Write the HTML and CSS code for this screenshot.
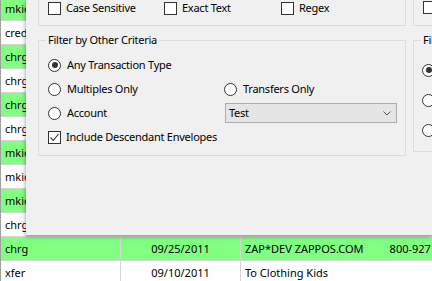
FILE: index.html
```html
<!DOCTYPE html>
<html>
<head>
    <meta charset="utf-8">
    <title>Filter Transactions</title>
    <link rel="stylesheet" href="styles.css">
</head>
<body>
    <div class="grid">
        <div class="row green"><div class="cell">mkid</div><div class="cell date"></div><div class="cell"></div></div>
        <div class="row"><div class="cell">cred</div><div class="cell date"></div><div class="cell"></div></div>
        <div class="row green"><div class="cell">chrg</div><div class="cell date"></div><div class="cell"></div></div>
        <div class="row"><div class="cell">chrg</div><div class="cell date"></div><div class="cell"></div></div>
        <div class="row green"><div class="cell">chrg</div><div class="cell date"></div><div class="cell"></div></div>
        <div class="row"><div class="cell">chrg</div><div class="cell date"></div><div class="cell"></div></div>
        <div class="row green"><div class="cell">mkid</div><div class="cell date"></div><div class="cell"></div></div>
        <div class="row"><div class="cell">mkid</div><div class="cell date"></div><div class="cell"></div></div>
        <div class="row green"><div class="cell">mkid</div><div class="cell date"></div><div class="cell"></div></div>
        <div class="row"><div class="cell">chrg</div><div class="cell date"></div><div class="cell"></div></div>
        <div class="row green"><div class="cell">chrg</div><div class="cell date">09/25/2011</div><div class="cell">ZAP*DEV ZAPPOS.COM<span class="memo">800-927</span></div></div>
        <div class="row"><div class="cell">xfer</div><div class="cell date">09/10/2011</div><div class="cell">To Clothing Kids</div></div>
    </div>

    <div class="panel">
        <div class="col main">
            <div class="topbox checks">
                <label class="opt"><span class="check"></span>Case Sensitive</label>
                <label class="opt"><span class="check"></span>Exact Text</label>
                <label class="opt"><span class="check"></span>Regex</label>
            </div>
            <fieldset class="group">
                <legend>Filter by Other Criteria</legend>
                <div class="opts">
                    <label class="opt wide"><span class="radio on"></span>Any Transaction Type</label>
                    <label class="opt"><span class="radio"></span>Multiples Only</label>
                    <label class="opt"><span class="radio"></span>Transfers Only</label>
                    <label class="opt"><span class="radio"></span>Account</label>
                    <div class="combo">Test
                        <svg class="chev" width="8" height="5" viewBox="0 0 8 5"><path d="M0.5 0.5 L4 4 L7.5 0.5" fill="none" stroke="#555" stroke-width="1"/></svg>
                    </div>
                    <label class="opt wide"><span class="check">
                        <svg width="11" height="11" viewBox="0 0 11 11"><path d="M1.5 5.5 L4.3 8.5 L9.5 2" fill="none" stroke="#333" stroke-width="1.1"/></svg>
                    </span>Include Descendant Envelopes</label>
                </div>
            </fieldset>
        </div>
        <div class="col side">
            <div class="topbox side-top">
                <span class="check"></span>
            </div>
            <fieldset class="group">
                <legend>Fil</legend>
                <div class="dates">
                    <span class="radio on"></span>
                    <span class="radio"></span>
                    <span class="radio"></span>
                </div>
            </fieldset>
        </div>
    </div>
</body>
</html>
```

FILE: styles.css
```css
body{
    margin: 0;
    width: 432px;
    height: 281px;
    overflow: hidden;
    position: relative;
    background: #fff;
    font-family: "Noto Sans", "Open Sans", sans-serif;
    font-size: 11px;
    letter-spacing: -0.25px;
    color: #000;
}

/* data grid behind the dialog */
.grid{
    margin-top: -3px;
    border-left: 1px solid #a0a0a0;
}
.row{
    display: grid;
    grid-template-columns: 120px 120px 1fr;
    height: 23px;
    line-height: 23px;
    border-bottom: 1px solid #d5d5d5;
    white-space: nowrap;
    letter-spacing: 0;
}
.row.green{
    background: #80ff80;
}
.cell{
    padding-left: 4px;
    border-right: 1px solid #d5d5d5;
    overflow: hidden;
}
.cell:last-child{
    border-right: none;
}
.date{
    text-align: center;
    padding-left: 0;
}
.memo{
    margin-left: 26px;
}

/* filter dialog */
.panel{
    position: absolute;
    top: 0;
    left: 26px;
    width: 406px;
    height: 236px;
    background: #f0f0f0;
    border-bottom: 1px solid #a8a8a8;
    box-shadow: -1px 1px 4px rgba(0,0,0,.3);
    display: flex;
    gap: 7px;
    padding-left: 12px;
    box-sizing: border-box;
    overflow: hidden;
}
.col{
    display: flex;
    flex-direction: column;
    flex-shrink: 0;
}
.main{
    width: 368px;
}
.side{
    width: 120px;
}
.topbox{
    height: 26px;
    box-sizing: border-box;
    border: 1px solid #dcdcdc;
    border-top: none;
}
.checks{
    display: grid;
    grid-template-columns: 116px 117px 1fr;
    padding: 1px 0 0 9px;
}
.side-top{
    padding: 1px 0 0 9px;
}
.group{
    margin: 6px 0 0;
    padding: 5px 9px 6px;
    border: 1px solid #dcdcdc;
    min-width: 0;
}
.group legend{
    margin-left: -2px;
    padding: 0 2px;
    line-height: 16px;
}
.opts{
    display: grid;
    grid-template-columns: 176px 1fr;
    grid-auto-rows: 24px;
    align-items: center;
}
.opts .wide{
    grid-column: 1 / 3;
}
.dates{
    display: grid;
    grid-auto-rows: 30px;
    align-items: center;
    padding-top: 2px;
    margin-left: -1px;
}
.opt{
    display: flex;
    align-items: center;
    gap: 6px;
    height: 14px;
    line-height: 14px;
    white-space: nowrap;
}
.check, .radio{
    display: block;
    width: 13px;
    height: 13px;
    box-sizing: border-box;
    border: 1px solid #333;
    background: #fff;
    flex-shrink: 0;
    position: relative;
}
.check{
    margin-right: -1px;
}
.check svg{
    display: block;
}
.radio{
    border-radius: 50%;
}
.radio.on::after{
    content: "";
    position: absolute;
    left: 2.5px;
    top: 2.5px;
    width: 6px;
    height: 6px;
    border-radius: 50%;
    background: #333;
}
.combo{
    margin-left: 1px;
    width: 172px;
    height: 20px;
    box-sizing: border-box;
    border: 1px solid #adadad;
    background: #e5e5e5;
    padding-left: 3px;
    line-height: 18px;
    display: flex;
    justify-content: space-between;
    align-items: center;
    padding-right: 5px;
}
```
